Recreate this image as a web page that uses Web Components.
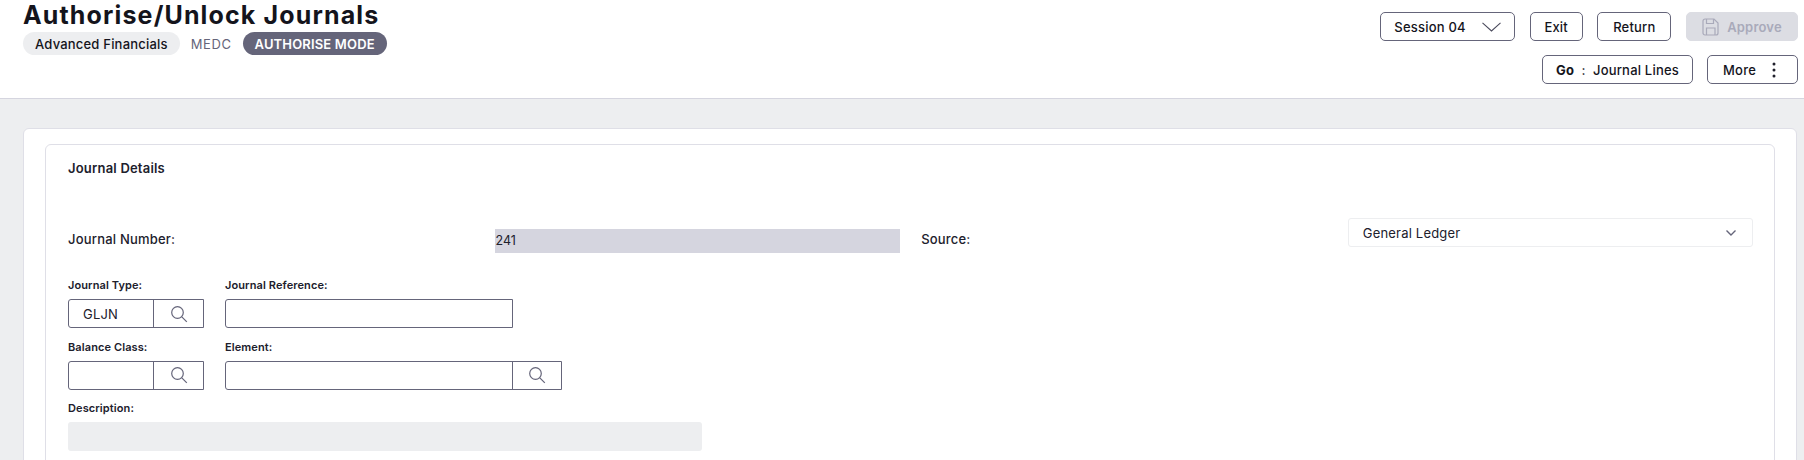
<!DOCTYPE html>
<html lang="en"><head><meta charset="utf-8"><title>Authorise/Unlock Journals</title>
<style>
html,body{margin:0;height:460px;overflow:hidden;background:#edeef0}
body{font-family:Inter,"Liberation Sans",sans-serif;color:#1a1a24}
</style></head><body>
<app-page>
  <page-header slot="header">
    <h1 slot="title">Authorise/Unlock Journals</h1>
    <tag-pill slot="tags">Advanced Financials</tag-pill>
    <plain-tag slot="tags">MEDC</plain-tag>
    <tag-pill slot="tags" kind="dark">AUTHORISE MODE</tag-pill>
    <action-btn slot="row1" w="135" style="gap:16px">Session 04<svg slot="end" width="19" height="10" viewBox="0 0 19 10" fill="none" stroke="#4a4a5c" stroke-width="1.1"><path d="M.5 .8L9.500 9 18.500 .8"/></svg></action-btn>
    <action-btn slot="row1" w="53">Exit</action-btn>
    <action-btn slot="row1" w="74">Return</action-btn>
    <action-btn slot="row1" w="112" disabled><svg slot="start" width="17" height="18" viewBox="0 0 17 18" fill="none" stroke="#a9aaba" stroke-width="1.2"><path d="M1 3a2 2 0 0 1 2-2h9l4 4v10a2 2 0 0 1-2 2H3a2 2 0 0 1-2-2z"/><path d="M4.500 1v4.500h7V1M4.500 17v-7h8.500v7"/></svg>Approve</action-btn>
    <action-btn slot="row2" w="151"><b>Go</b>&nbsp;&nbsp;:&nbsp;&nbsp;Journal Lines</action-btn>
    <action-btn slot="row2" w="91" style="gap:10px">More<svg slot="end" width="16" height="16" viewBox="0 0 16 16" fill="#20202c"><circle cx="8" cy="2" r="1.500"/><circle cx="8" cy="8" r="1.500"/><circle cx="8" cy="14" r="1.500"/></svg></action-btn>
  </page-header>
  <outer-card>
    <inner-card heading="Journal Details">
      <form-grid>
        <inline-label>Journal Number:</inline-label>
        <read-value>241</read-value>
        <inline-label>Source:</inline-label>
        <select-box>General Ledger</select-box>
      </form-grid>
      <field-row>
        <form-field label="Journal Type:"><lookup-box w="136" split="85">GLJN</lookup-box></form-field>
        <form-field label="Journal Reference:"><lookup-box w="288" plain></lookup-box></form-field>
      </field-row>
      <field-row>
        <form-field label="Balance Class:"><lookup-box w="136" split="85"></lookup-box></form-field>
        <form-field label="Element:"><lookup-box w="337" split="287"></lookup-box></form-field>
      </field-row>
      <field-row>
        <form-field label="Description:"><desc-box></desc-box></form-field>
      </field-row>
    </inner-card>
  </outer-card>
</app-page>
<script>
function def(name, css, html, init){
  customElements.define(name, class extends HTMLElement{
    constructor(){super();const r=this.attachShadow({mode:'open'});r.innerHTML='<style>'+css+'</style>'+(typeof html==='function'?html(this):html);}
    connectedCallback(){ if(init) init(this); }
  });
}
const LS='letter-spacing:.2px;';
def('app-page',':host{display:block;width:1804px;height:460px;overflow:hidden}','<slot name="header"></slot><slot></slot>');
def('page-header',`:host{display:flex;justify-content:space-between;box-sizing:border-box;height:99px;background:#fff;border-bottom:1px solid #d5d5df;padding:0 6px 0 23px}
 .l{display:flex;flex-direction:column;gap:0}
 .tags{display:flex;align-items:center;margin-top:2px}
 .r{display:flex;flex-direction:column;align-items:flex-end;gap:14px;padding-top:12px}
 .row{display:flex;gap:14.670px}
 .row:last-child{gap:14px}
 ::slotted(h1){margin:0;font-size:25px;line-height:30px;font-weight:700;color:#14141c;letter-spacing:1.14px}`,
 `<div class="l"><slot name="title"></slot><div class="tags"><slot name="tags"></slot></div></div><div class="r"><div class="row"><slot name="row1"></slot></div><div class="row"><slot name="row2"></slot></div></div>`);
def('tag-pill',`:host{display:inline-flex;align-items:center;justify-content:center;height:23px;border-radius:12px;background:#edeef0;color:#14141c;font-size:13px;font-weight:500;padding:0 12px;${LS}}
 :host([kind=dark]){background:#65657a;color:#fff;font-weight:600;letter-spacing:.16px}`,'<slot></slot>');
def('plain-tag',`:host{display:inline-block;color:#65657a;font-size:13px;margin:0 11px;letter-spacing:.6px}`,'<slot></slot>');
def('action-btn',`:host{display:inline-flex;align-items:center;justify-content:center;box-sizing:border-box;height:29px;border:1px solid #65657a;border-radius:5px;background:#fff;font-size:13px;font-weight:500;color:#14141c;gap:8px;${LS}white-space:nowrap}
 :host([disabled]){background:#dcdde3;border-color:#dcdde3;color:#a9aaba;font-weight:600}`,'<slot name="start"></slot><span><slot></slot></span><slot name="end"></slot>',
 el=>{el.style.width=el.getAttribute('w')+'px'});
def('outer-card',`:host{display:block;box-sizing:border-box;margin:29px 7px 0 23px;padding:15px 21px 0 21px;height:400px;background:#fff;border:1px solid #dfdfe7;border-radius:6px}`,'<slot></slot>');
def('inner-card',`:host{display:block;box-sizing:border-box;height:400px;border:1px solid #dfdfe7;border-radius:6px;padding:15px 21px 0 22px}
 h2{margin:0;font-size:13px;line-height:17px;font-weight:600;color:#20202c;height:58px;${LS}}`,
 el=>`<h2>${el.getAttribute('heading')}</h2><slot></slot>`);
def('form-grid',`:host{display:grid;grid-template-columns:repeat(4,1fr);column-gap:21.330px;align-items:start;height:60px;font-size:13px}`,'<slot></slot>');
def('inline-label',`:host{display:block;margin-top:13px;font-size:13px;line-height:16px;font-weight:500;color:#20202c;${LS}}`,'<slot></slot>');
def('read-value',`:host{display:flex;align-items:center;box-sizing:border-box;height:24px;margin-top:11px;padding:0 0 1px 1px;background:#d5d5df;font-size:12.500px;color:#20202c}`,'<slot></slot>');
def('select-box',`:host{display:flex;align-items:center;justify-content:space-between;box-sizing:border-box;height:29px;border:1px solid #edeef0;border-radius:3px;padding:0 15px 0 14px;font-size:13px;color:#20202c;${LS}}`,
 '<slot></slot><svg width="12" height="8" viewBox="0 0 12 8" fill="none" stroke="#65657a" stroke-width="1.400"><path d="M1.500 1.500L6 6l4.500-4.500"/></svg>');
def('field-row',`:host{display:flex;gap:21px;margin-bottom:11.500px}`,'<slot></slot>');
def('form-field',`:host{display:block}
 label{display:block;font-size:11px;line-height:14px;font-weight:600;color:#20202c;margin-bottom:7px;letter-spacing:.1px}`,
 el=>`<label>${el.getAttribute('label')}</label><slot></slot>`);
def('lookup-box',`:host{display:flex;box-sizing:border-box;height:29px;border:1px solid #65657a;border-radius:3px 0 0 3px;font-size:13px;color:#20202c;${LS}}
 .v{box-sizing:border-box;display:flex;align-items:center;padding-left:14px;border-right:1px solid #65657a;height:100%}
 :host([plain]) .v{border-right:0}
 .s{flex:1;display:flex;align-items:center;justify-content:center}`,
 el=>{const sp=el.getAttribute('split');
   return `<div class="v" style="width:${sp||'100%'}${sp?'px':''}"><slot></slot></div>`+(sp?`<div class="s"><svg width="18" height="18" viewBox="0 0 18 18" fill="none" stroke="#65657a" stroke-width="1.200"><circle cx="7.500" cy="7.500" r="5.800"/><path d="M11.800 11.800l5 5"/></svg></div>`:'')},
 el=>{el.style.width=el.getAttribute('w')+'px'});
def('desc-box',`:host{display:block;width:634px;height:29px;background:#edeef0;border-radius:3px}`,'');
</script>
</body></html>
